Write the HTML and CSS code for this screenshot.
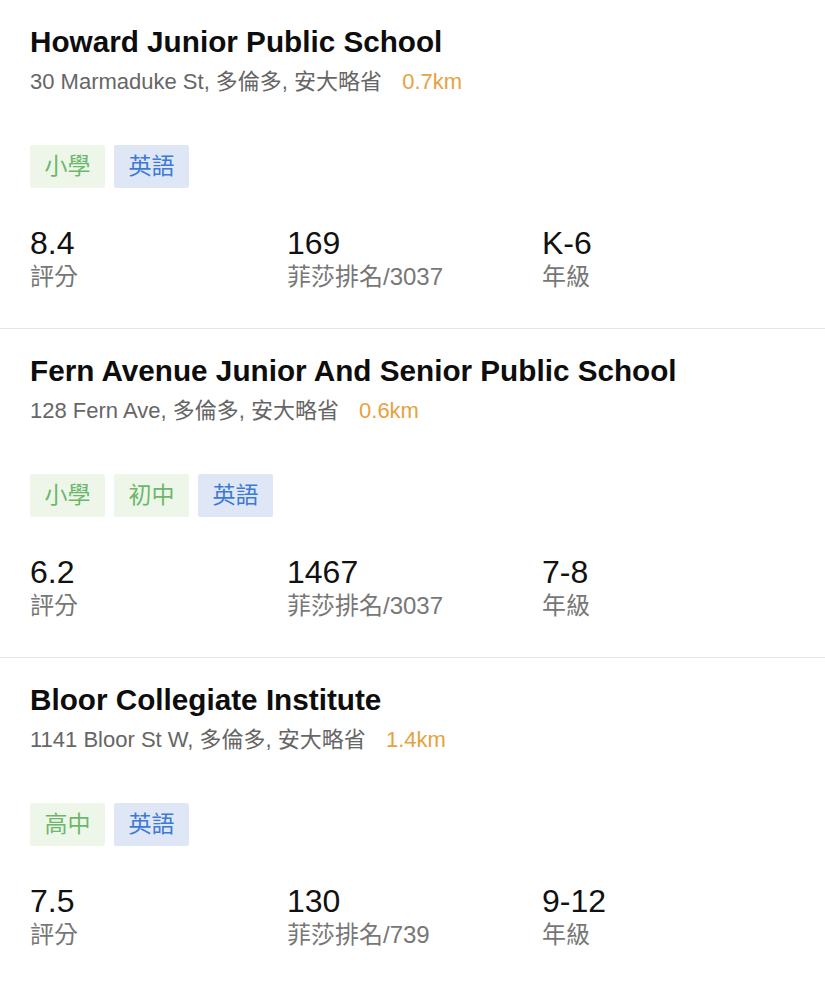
FILE: index.html
```html
<!DOCTYPE html>
<html lang="zh-Hant">
<head>
    <meta charset="UTF-8">
    <meta name="viewport" content="width=device-width, initial-scale=1.0">
    <title>學校列表</title>
    <link rel="stylesheet" href="styles.css">
</head>
<body>
    <div class="school-list">
        <div class="school">
            <h2 class="school-name">Howard Junior Public School</h2>
            <p class="address">30 Marmaduke St, 多倫多, 安大略省 <span class="distance">0.7km</span></p>
            <div class="tags">
                <span class="tag tag-level">小學</span>
                <span class="tag tag-lang">英語</span>
            </div>
            <div class="stats">
                <div class="stat">
                    <div class="stat-value">8.4</div>
                    <div class="stat-label">評分</div>
                </div>
                <div class="stat">
                    <div class="stat-value">169</div>
                    <div class="stat-label">菲莎排名/3037</div>
                </div>
                <div class="stat">
                    <div class="stat-value">K-6</div>
                    <div class="stat-label">年級</div>
                </div>
            </div>
        </div>

        <div class="school">
            <h2 class="school-name">Fern Avenue Junior And Senior Public School</h2>
            <p class="address">128 Fern Ave, 多倫多, 安大略省 <span class="distance">0.6km</span></p>
            <div class="tags">
                <span class="tag tag-level">小學</span>
                <span class="tag tag-level">初中</span>
                <span class="tag tag-lang">英語</span>
            </div>
            <div class="stats">
                <div class="stat">
                    <div class="stat-value">6.2</div>
                    <div class="stat-label">評分</div>
                </div>
                <div class="stat">
                    <div class="stat-value">1467</div>
                    <div class="stat-label">菲莎排名/3037</div>
                </div>
                <div class="stat">
                    <div class="stat-value">7-8</div>
                    <div class="stat-label">年級</div>
                </div>
            </div>
        </div>

        <div class="school">
            <h2 class="school-name">Bloor Collegiate Institute</h2>
            <p class="address">1141 Bloor St W, 多倫多, 安大略省 <span class="distance">1.4km</span></p>
            <div class="tags">
                <span class="tag tag-level">高中</span>
                <span class="tag tag-lang">英語</span>
            </div>
            <div class="stats">
                <div class="stat">
                    <div class="stat-value">7.5</div>
                    <div class="stat-label">評分</div>
                </div>
                <div class="stat">
                    <div class="stat-value">130</div>
                    <div class="stat-label">菲莎排名/739</div>
                </div>
                <div class="stat">
                    <div class="stat-value">9-12</div>
                    <div class="stat-label">年級</div>
                </div>
            </div>
        </div>
    </div>
</body>
</html>
```

FILE: styles.css
```css
body {
    font-family: "Liberation Sans", "Noto Sans CJK TC", sans-serif;
    background-color: #ffffff;
    margin: 0;
    padding: 0;
    color: #111111;
}

.school {
    padding: 24px 30px 36px;
    border-bottom: 1px solid #e6e6e6;
}

.school-name {
    margin: 0;
    font-size: 29.7px;
    line-height: 36px;
    font-weight: bold;
    color: #0d0d0d;
}

.address {
    margin: 8px 0 0;
    font-size: 22px;
    line-height: 28px;
    color: #666666;
}

.distance {
    color: #e6a23e;
    margin-left: 14px;
}

.tags {
    display: flex;
    gap: 9px;
    margin-top: 49px;
}

.tag {
    display: block;
    width: 75px;
    height: 43px;
    line-height: 43px;
    text-align: center;
    font-size: 23px;
    border-radius: 2px;
}

.tag-level {
    background-color: #eef6ea;
    color: #6cb86a;
}

.tag-lang {
    background-color: #dfe6f6;
    color: #3c7ad6;
}

.stats {
    display: grid;
    grid-template-columns: 257px 255px 1fr;
    margin-top: 38px;
}

.stat-value {
    font-size: 32px;
    line-height: 34px;
    color: #111111;
}

.stat-label {
    font-size: 24px;
    line-height: 30px;
    color: #777777;
    margin-top: 2px;
}
```
